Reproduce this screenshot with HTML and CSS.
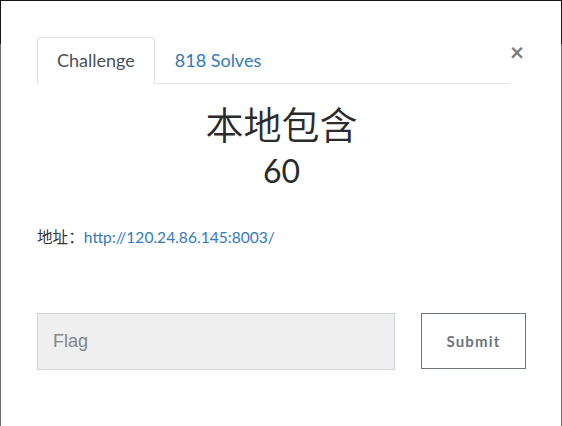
FILE: index.html
```html
<!DOCTYPE html>
<html lang="zh">
<head>
    <meta charset="UTF-8">
    <meta name="viewport" content="width=device-width, initial-scale=1.0">
    <title>本地包含</title>
    <link rel="stylesheet" href="styles.css">
</head>
<body>
    <div class="modal">
        <div class="modal-head">
            <ul class="tabs">
                <li class="tab active"><a href="#">Challenge</a></li>
                <li class="tab"><a href="#">818 Solves</a></li>
            </ul>
            <button class="close" type="button">&times;</button>
        </div>
        <div class="challenge">
            <h3 class="challenge-name">本地包含</h3>
            <h4 class="challenge-value">60</h4>
            <p class="challenge-desc">地址：<a href="#">http://120.24.86.145:8003/</a></p>
        </div>
        <form class="submit-row">
            <input class="flag-input" type="text" placeholder="Flag">
            <button class="submit-btn" type="button">Submit</button>
        </form>
    </div>
</body>
</html>
```

FILE: styles.css
```css
body {
    margin: 0;
    background: linear-gradient(#161616 44px, #6b6b6b 44px);
    font-family: 'Lato', 'Noto Sans CJK SC', sans-serif;
    color: #333;
}
.modal {
    background-color: white;
    margin: 1px 1px 0;
    min-height: 425px;
    padding: 36px 35px 0 36px;
    box-sizing: border-box;
}
.modal-head {
    display: flex;
    align-items: flex-start;
}
.tabs {
    flex: 1;
    display: flex;
    list-style: none;
    margin: 0;
    padding: 0;
    border-bottom: 1px solid #dee2e6;
}
.tab {
    margin-bottom: -1px;
}
.tab a {
    display: block;
    padding: 9px 19px;
    font-size: 18px;
    line-height: 27px;
    color: #337ab7;
    text-decoration: none;
    border: 1px solid transparent;
    border-radius: 4px 4px 0 0;
}
.tab.active a {
    color: #495057;
    border-color: #dee2e6 #dee2e6 white;
}
.close {
    margin: 3px 2px 0 0;
    padding: 0;
    border: none;
    background: none;
    font-family: 'Lato', sans-serif;
    font-size: 24px;
    font-weight: bold;
    line-height: 1;
    color: #7a7a7a;
}
.challenge {
    text-align: center;
}
.challenge-name {
    margin: 18px 0 0;
    font-size: 38px;
    font-weight: 350;
    line-height: 1.2;
    color: #2b2b2b;
}
.challenge-value {
    margin: 4px 0 0;
    font-size: 32px;
    font-weight: normal;
    line-height: 1.2;
    color: #2b2b2b;
}
.challenge-desc {
    margin: 37px 0 0;
    text-align: left;
    font-size: 15.6px;
    line-height: 20px;
}
.challenge-desc a {
    color: #337ab7;
    text-decoration: none;
}
.submit-row {
    display: flex;
    gap: 26px;
    margin-top: 66px;
}
.flag-input {
    flex: 1;
    height: 57px;
    box-sizing: border-box;
    padding: 0 15px;
    border: 1px solid #ced4da;
    background-color: #efefef;
    font-family: 'Liberation Sans', sans-serif;
    font-size: 18px;
    color: #495057;
}
.flag-input::placeholder {
    color: #80868e;
}
.submit-btn {
    width: 105px;
    height: 56px;
    border: 1px solid #6c757d;
    background-color: white;
    font-family: 'Lato', sans-serif;
    font-size: 15px;
    font-weight: bold;
    letter-spacing: 1.2px;
    color: #6c757d;
}
```
